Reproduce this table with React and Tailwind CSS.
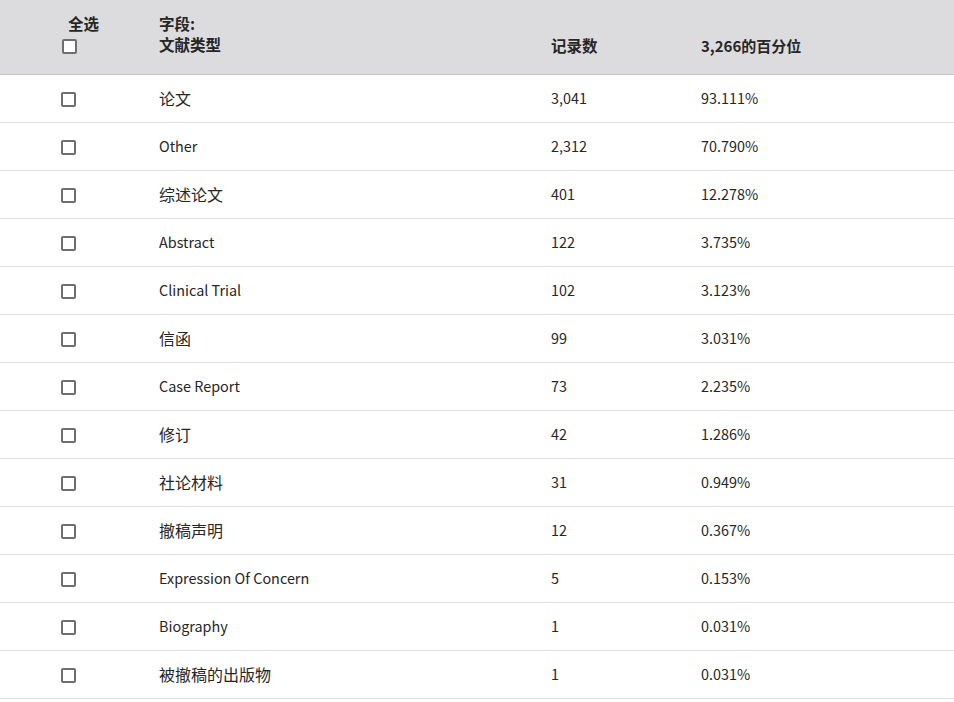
import React from "react";

const rows = [
  ["论文", "3,041", "93.111%"],
  ["Other", "2,312", "70.790%"],
  ["综述论文", "401", "12.278%"],
  ["Abstract", "122", "3.735%"],
  ["Clinical Trial", "102", "3.123%"],
  ["信函", "99", "3.031%"],
  ["Case Report", "73", "2.235%"],
  ["修订", "42", "1.286%"],
  ["社论材料", "31", "0.949%"],
  ["撤稿声明", "12", "0.367%"],
  ["Expression Of Concern", "5", "0.153%"],
  ["Biography", "1", "0.031%"],
  ["被撤稿的出版物", "1", "0.031%"],
];

const isCjk = (s) => /[\u4e00-\u9fff]/.test(s);

function Box({ className = "" }) {
  return (
    <span
      className={`block w-[15px] h-[15px] border-2 border-[#6e6e6e] rounded-[2px] bg-white ${className}`}
    />
  );
}

export default function App() {
  return (
    <div
      className="w-[954px] h-[702px] overflow-hidden bg-white text-[#262626] text-[14.4px]"
      style={{ fontFamily: '"Noto Sans CJK SC", "Noto Sans", sans-serif' }}
    >
      <div className="grid grid-cols-[159px_392px_150px_1fr] h-[75px] bg-[#dcdcde] border-b border-[#c4c4c6] font-bold text-[15.5px] leading-[21px]">
        <div className="pt-[13px] pl-[68px] flex flex-col">
          <span>全选</span>
          <Box className="mt-[5px] -ml-[6px] bg-transparent" />
        </div>
        <div className="pt-[13px]">
          <div>字段:</div>
          <div>文献类型</div>
        </div>
        <div className="pt-[35px]">记录数</div>
        <div className="pt-[35px] text-[15px]">3,266的百分位</div>
      </div>
      {rows.map(([name, count, pct]) => (
        <div
          key={name}
          className="grid grid-cols-[159px_392px_150px_1fr] h-[48px] items-center border-b border-[#dedede]"
        >
          <div className="pl-[61px] mt-[2px]">
            <Box />
          </div>
          <div className={`-mt-[2px] ${isCjk(name) ? "text-[16px]" : ""}`}>{name}</div>
          <div className="-mt-[2px]">{count}</div>
          <div className="-mt-[2px]">{pct}</div>
        </div>
      ))}
      <div className="pl-[478px] pt-[1px] text-[11px] text-[#888]">导出数据表</div>
    </div>
  );
}
